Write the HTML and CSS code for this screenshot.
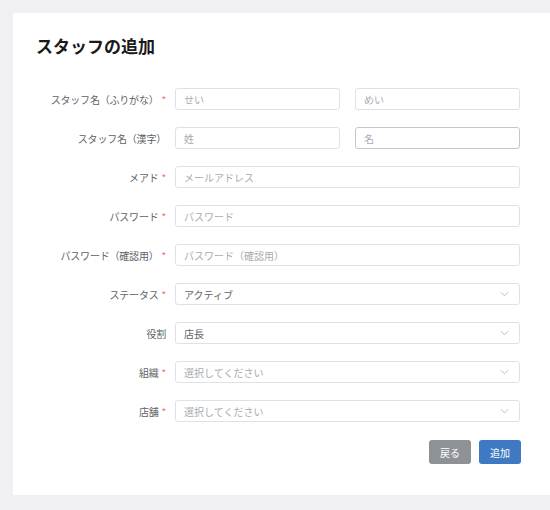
FILE: index.html
```html
<!DOCTYPE html>
<html lang="ja">
<head>
<meta charset="utf-8">
<title>スタッフの追加</title>
<link rel="stylesheet" href="styles.css">
</head>
<body>
<div class="card">
  <h1 class="title">スタッフの追加</h1>
  <form class="form">
    <div class="row">
      <label class="label">スタッフ名（ふりがな）<span class="req">*</span></label>
      <div class="control split">
        <input class="input" placeholder="せい">
        <input class="input" placeholder="めい">
      </div>
    </div>
    <div class="row">
      <label class="label">スタッフ名（漢字）</label>
      <div class="control split">
        <input class="input" placeholder="姓">
        <input class="input hover" placeholder="名">
      </div>
    </div>
    <div class="row">
      <label class="label">メアド<span class="req">*</span></label>
      <div class="control"><input class="input" placeholder="メールアドレス"></div>
    </div>
    <div class="row">
      <label class="label">パスワード<span class="req">*</span></label>
      <div class="control"><input class="input" placeholder="パスワード"></div>
    </div>
    <div class="row">
      <label class="label">パスワード（確認用）<span class="req">*</span></label>
      <div class="control"><input class="input" placeholder="パスワード（確認用）"></div>
    </div>
    <div class="row">
      <label class="label">ステータス<span class="req">*</span></label>
      <div class="control"><div class="select"><span class="value">アクティブ</span><svg class="chev" viewBox="0 0 10 6" width="9" height="6"><path d="M1 1l4 4 4-4" fill="none" stroke="#b4b7bd" stroke-width="1"/></svg></div></div>
    </div>
    <div class="row">
      <label class="label">役割</label>
      <div class="control"><div class="select"><span class="value">店長</span><svg class="chev" viewBox="0 0 10 6" width="9" height="6"><path d="M1 1l4 4 4-4" fill="none" stroke="#b4b7bd" stroke-width="1"/></svg></div></div>
    </div>
    <div class="row">
      <label class="label">組織<span class="req">*</span></label>
      <div class="control"><div class="select"><span class="ph">選択してください</span><svg class="chev" viewBox="0 0 10 6" width="9" height="6"><path d="M1 1l4 4 4-4" fill="none" stroke="#b4b7bd" stroke-width="1"/></svg></div></div>
    </div>
    <div class="row">
      <label class="label">店舗<span class="req">*</span></label>
      <div class="control"><div class="select"><span class="ph">選択してください</span><svg class="chev" viewBox="0 0 10 6" width="9" height="6"><path d="M1 1l4 4 4-4" fill="none" stroke="#b4b7bd" stroke-width="1"/></svg></div></div>
    </div>
    <div class="actions">
      <button type="button" class="btn back">戻る</button>
      <button type="button" class="btn add">追加</button>
    </div>
  </form>
</div>
</body>
</html>
```

FILE: styles.css
```css
* { box-sizing: border-box; }
html, body {
  margin: 0;
  padding: 0;
  background: #f0f0f4;
  font-family: "Noto Sans CJK JP", "Noto Sans", sans-serif;
}
body { width: 550px; height: 510px; overflow: hidden; }
.card {
  margin: 13px 0 0 13px;
  width: 537px;
  height: 482px;
  background: #ffffff;
  padding: 21px 0 0 0;
}
.title {
  margin: 0 0 0 23px;
  font-size: 17px;
  line-height: 24px;
  font-weight: 700;
  color: #1a1a1a;
}
.form {
  margin-top: 30px;
  display: flex;
  flex-direction: column;
  gap: 17px;
}
.row {
  display: flex;
  align-items: center;
  gap: 9px;
  height: 22px;
}
.label {
  width: 153px;
  text-align: right;
  font-size: 10px;
  letter-spacing: -0.2px;
  color: #606266;
  white-space: nowrap;
}
.req {
  color: #f56c6c;
  margin-left: 3px;
}
.control {
  width: 345px;
  height: 22px;
}
.split {
  display: flex;
  gap: 15px;
}
.input, .select {
  display: block;
  width: 100%;
  height: 22px;
  border: 1px solid #dfe1e6;
  border-radius: 3px;
  padding: 0 8px;
  font-family: inherit;
  font-size: 10px;
  color: #606266;
  background: #fff;
  outline: none;
  margin: 0;
}
.split .input { width: 165px; }
.input.hover { border-color: #c4c7cd; }
.input::placeholder { color: #a8abb2; }
.select {
  display: flex;
  align-items: center;
  justify-content: space-between;
  padding-right: 10px;
}
.ph { color: #a8abb2; }
.value { color: #606266; }
.chev { display: block; }
.actions {
  display: flex;
  justify-content: flex-end;
  gap: 8px;
  width: 508px;
  margin-top: 1px;
}
.btn {
  width: 42px;
  height: 24px;
  border: none;
  border-radius: 3px;
  color: #fff;
  font-family: inherit;
  font-size: 10px;
  padding: 0;
}
.back { background: #8e9296; }
.add { background: #3e79c2; }
```
